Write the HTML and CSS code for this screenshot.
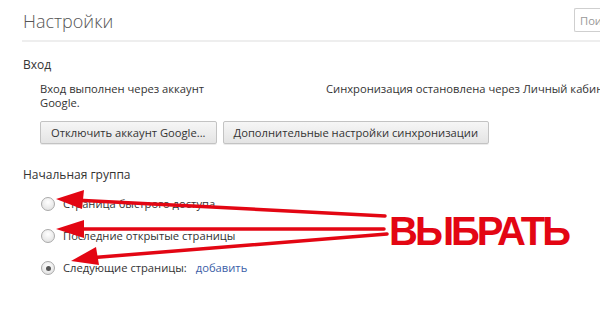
FILE: index.html
```html
<!DOCTYPE html>
<html lang="ru">
<head>
<meta charset="utf-8">
<link rel="stylesheet" href="styles.css">
</head>
<body>
<div class="page">
  <header class="header">
    <h1 class="title">Настройки</h1>
    <div class="search">Поиск</div>
  </header>
  <section class="section">
    <h2 class="section-title">Вход</h2>
    <div class="signin">
      <div class="signin-row">
        <p class="signin-text">Вход выполнен через аккаунт Google.</p>
        <p class="sync-text">Синхронизация остановлена через Личный кабинет</p>
      </div>
      <div class="buttons">
        <button class="btn">Отключить аккаунт Google...</button>
        <button class="btn">Дополнительные настройки синхронизации</button>
      </div>
    </div>
  </section>
  <section class="section start">
    <h2 class="section-title">Начальная группа</h2>
    <div class="radios">
      <label class="radio"><span class="dot"></span>Страница быстрого доступа</label>
      <label class="radio"><span class="dot"></span>Последние открытые страницы</label>
      <label class="radio"><span class="dot checked"></span>Следующие страницы:<a class="link">добавить</a></label>
    </div>
  </section>
</div>
<svg class="arrows" width="600" height="309" viewBox="0 0 600 309">
  <g stroke="#e30613" stroke-width="3.5" stroke-linecap="round">
    <line x1="385" y1="216" x2="74" y2="200"/>
    <line x1="384" y1="229" x2="74" y2="229"/>
    <line x1="387" y1="234" x2="88" y2="258"/>
  </g>
  <g fill="#e30613">
    <polygon points="56,199 84,190 82,209"/>
    <polygon points="56,229 84,220 84,238"/>
    <polygon points="71,261 96,247 99,265"/>
  </g>
</svg>
<div class="callout">ВЫБРАТЬ</div>
</body>
</html>
```
FILE: styles.css
```css
html, body {
  margin: 0;
  padding: 0;
  background: #fff;
}
body {
  width: 600px;
  height: 309px;
  overflow: hidden;
  position: relative;
  font-family: "Open Sans", "Noto Sans", sans-serif;
  color: #333;
}
.page {
  padding: 0 0 0 23px;
}
.header {
  display: flex;
  align-items: center;
  justify-content: space-between;
  height: 40px;
  border-bottom: 2px solid #eeeeee;
  margin-left: -1px;
  padding-left: 1px;
}
.title {
  margin: 0;
  font-weight: 300;
  font-size: 18px;
  color: #555;
  line-height: 24px;
  padding-top: 1px;
}
.search {
  width: 60px;
  height: 24px;
  border: 1px solid #cfcfcf;
  border-right: none;
  border-radius: 2px 0 0 2px;
  box-sizing: border-box;
  font-size: 11.2px;
  color: #999;
  padding: 4px 0 0 5px;
  margin-right: -34px;
  white-space: nowrap;
  overflow: hidden;
}
.section-title {
  margin: 0;
  font-size: 12px;
  font-weight: 400;
  line-height: 16px;
  color: #333;
}
.section {
  padding-top: 15px;
}
.signin {
  padding-left: 17px;
  padding-top: 9px;
}
.signin-row {
  display: grid;
  grid-template-columns: 286px 1fr;
  font-size: 11.2px;
  line-height: 14px;
}
.signin-text, .sync-text {
  margin: 0;
}
.signin-text {
  width: 175px;
}
.sync-text {
  white-space: nowrap;
}
.buttons {
  display: flex;
  gap: 6px;
  margin-top: 11px;
}
.btn {
  font-family: inherit;
  font-size: 11.2px;
  color: #333;
  height: 23px;
  padding: 0 10px;
  border: 1px solid #c3c3c3;
  border-radius: 2px;
  background: linear-gradient(#f6f6f6, #e4e4e4);
  box-shadow: 0 1px 0 rgba(0,0,0,0.08);
}
.start {
  padding-top: 23px;
}
.radios {
  display: flex;
  flex-direction: column;
  gap: 18px;
  padding-left: 18px;
  padding-top: 14px;
  font-size: 11.2px;
  line-height: 14px;
}
.radio {
  display: flex;
  align-items: center;
  gap: 8px;
}
.dot {
  width: 14px;
  height: 14px;
  border-radius: 50%;
  border: 1px solid #a9a9a9;
  box-sizing: border-box;
  background: radial-gradient(circle at 50% 35%, #ffffff, #dcdcdc);
  position: relative;
}
.dot.checked::after {
  content: "";
  position: absolute;
  left: 3.5px;
  top: 3.5px;
  width: 5px;
  height: 5px;
  border-radius: 50%;
  background: #555;
}
.link {
  color: #3b5ea7;
  margin-left: 1px;
}
.arrows {
  position: absolute;
  left: 0;
  top: 0;
}
.callout {
  position: absolute;
  left: 389px;
  top: 207px;
  font-family: "Liberation Sans", sans-serif;
  font-weight: 700;
  font-size: 40px;
  line-height: 48px;
  color: #e30613;
  letter-spacing: -3px;
}
```
